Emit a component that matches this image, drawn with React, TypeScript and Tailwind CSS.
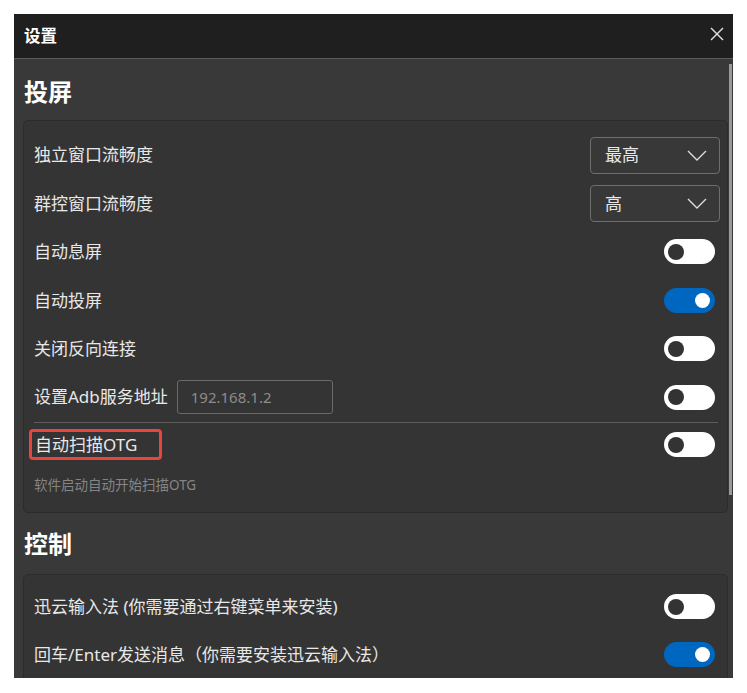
import React from "react";

const font = { fontFamily: '"Noto Sans", "Noto Sans CJK SC", sans-serif' };

function Toggle({ on }: { on?: boolean }) {
  return on ? (
    <div className="mr-[5px] flex h-[25px] w-[51px] items-center justify-end rounded-full bg-[#0067c0] pr-[5px]">
      <div className="h-[15px] w-[15px] rounded-full bg-white" />
    </div>
  ) : (
    <div className="mr-[5px] flex h-[25px] w-[51px] items-center rounded-full bg-white pl-[4px]">
      <div className="h-[16px] w-[16px] rounded-full bg-[#333333]" />
    </div>
  );
}

function Select({ value }: { value: string }) {
  return (
    <div className="flex h-[37px] w-[130px] items-center justify-between rounded-[4px] border border-[#6e6e6e] bg-[#383838] pl-[14px] pr-[12px]">
      <span className="text-[17px] text-[#e8e8e8]">{value}</span>
      <svg width="20" height="11" viewBox="0 0 20 11" fill="none">
        <polyline points="1,1 10,10 19,1" stroke="#dcdcdc" strokeWidth="1.4" />
      </svg>
    </div>
  );
}

function Row({ label, children, extra }: { label: string; children?: React.ReactNode; extra?: React.ReactNode }) {
  return (
    <div className="flex h-[48.4px] items-center justify-between">
      <div className="flex items-center gap-[9px]">
        <span className="text-[17px] text-[#e8e8e8]">{label}</span>
        {extra}
      </div>
      {children}
    </div>
  );
}

export default function App() {
  return (
    <div className="min-h-screen bg-white pl-[14px] pt-[14px]" style={font}>
      <div className="flex h-[664px] w-[719px] flex-col overflow-hidden bg-[#393939]">
        <div className="flex h-[45px] shrink-0 items-center justify-between border-b border-[#5a5a5a] bg-[#1f1f1f] pl-[10px] pr-[9px]">
          <span className="text-[16.5px] font-bold text-white">设置</span>
          <svg width="14" height="14" viewBox="0 0 14 14" className="-mt-[4px]">
            <line x1="1" y1="1" x2="13" y2="13" stroke="#e0e0e0" strokeWidth="1.4" />
            <line x1="13" y1="1" x2="1" y2="13" stroke="#e0e0e0" strokeWidth="1.4" />
          </svg>
        </div>
        <div className="flex min-h-0 flex-1">
          <div className="flex-1 pl-[9px]">
            <div className="flex h-[61px] items-center pl-[1px] pt-[4px]">
              <span className="text-[24px] font-bold text-white">投屏</span>
            </div>
            <div className="rounded-[5px] border border-[#2c2c2c] bg-[#343434] pb-[17px] pl-[10px] pr-[7px] pt-[10px]">
              <Row label="独立窗口流畅度">
                <Select value="最高" />
              </Row>
              <Row label="群控窗口流畅度">
                <Select value="高" />
              </Row>
              <Row label="自动息屏">
                <Toggle />
              </Row>
              <Row label="自动投屏">
                <Toggle on />
              </Row>
              <Row label="关闭反向连接">
                <Toggle />
              </Row>
              <Row
                label="设置Adb服务地址"
                extra={
                  <div className="flex h-[34px] w-[156px] items-center rounded-[3px] border border-[#6a6a6a] pl-[13px] text-[15px] text-[#8c8c8c]">
                    192.168.1.2
                  </div>
                }
              >
                <Toggle />
              </Row>
              <div className="mr-[2px] mt-[1px] h-px bg-[#5c5c5c]" />
              <div className="mt-[6px] flex h-[31px] items-center justify-between">
                <div className="-ml-[5px] flex h-[31px] w-[133px] items-center rounded-[4px] border-[3px] border-[#e8453e] pl-[3px]">
                  <span className="text-[17px] text-[#e8e8e8]">自动扫描OTG</span>
                </div>
                <Toggle />
              </div>
              <div className="mt-[15px] text-[13.5px] leading-[20px] text-[#858585]">软件启动自动开始扫描OTG</div>
            </div>
            <div className="flex h-[61px] items-center pl-[1px]">
              <span className="text-[24px] font-bold text-white">控制</span>
            </div>
            <div className="rounded-[5px] border border-[#2c2c2c] bg-[#343434] pl-[10px] pr-[7px] pt-[7px]">
              <Row label="迅云输入法 (你需要通过右键菜单来安装)">
                <Toggle />
              </Row>
              <Row label="回车/Enter发送消息（你需要安装迅云输入法）">
                <Toggle on />
              </Row>
              <div className="h-[40px]" />
            </div>
          </div>
          <div className="w-[5px] shrink-0 pl-[1px] pt-[5px]">
            <div className="h-[431px] w-[3px] bg-[#9a9a9a]" />
          </div>
        </div>
      </div>
    </div>
  );
}
